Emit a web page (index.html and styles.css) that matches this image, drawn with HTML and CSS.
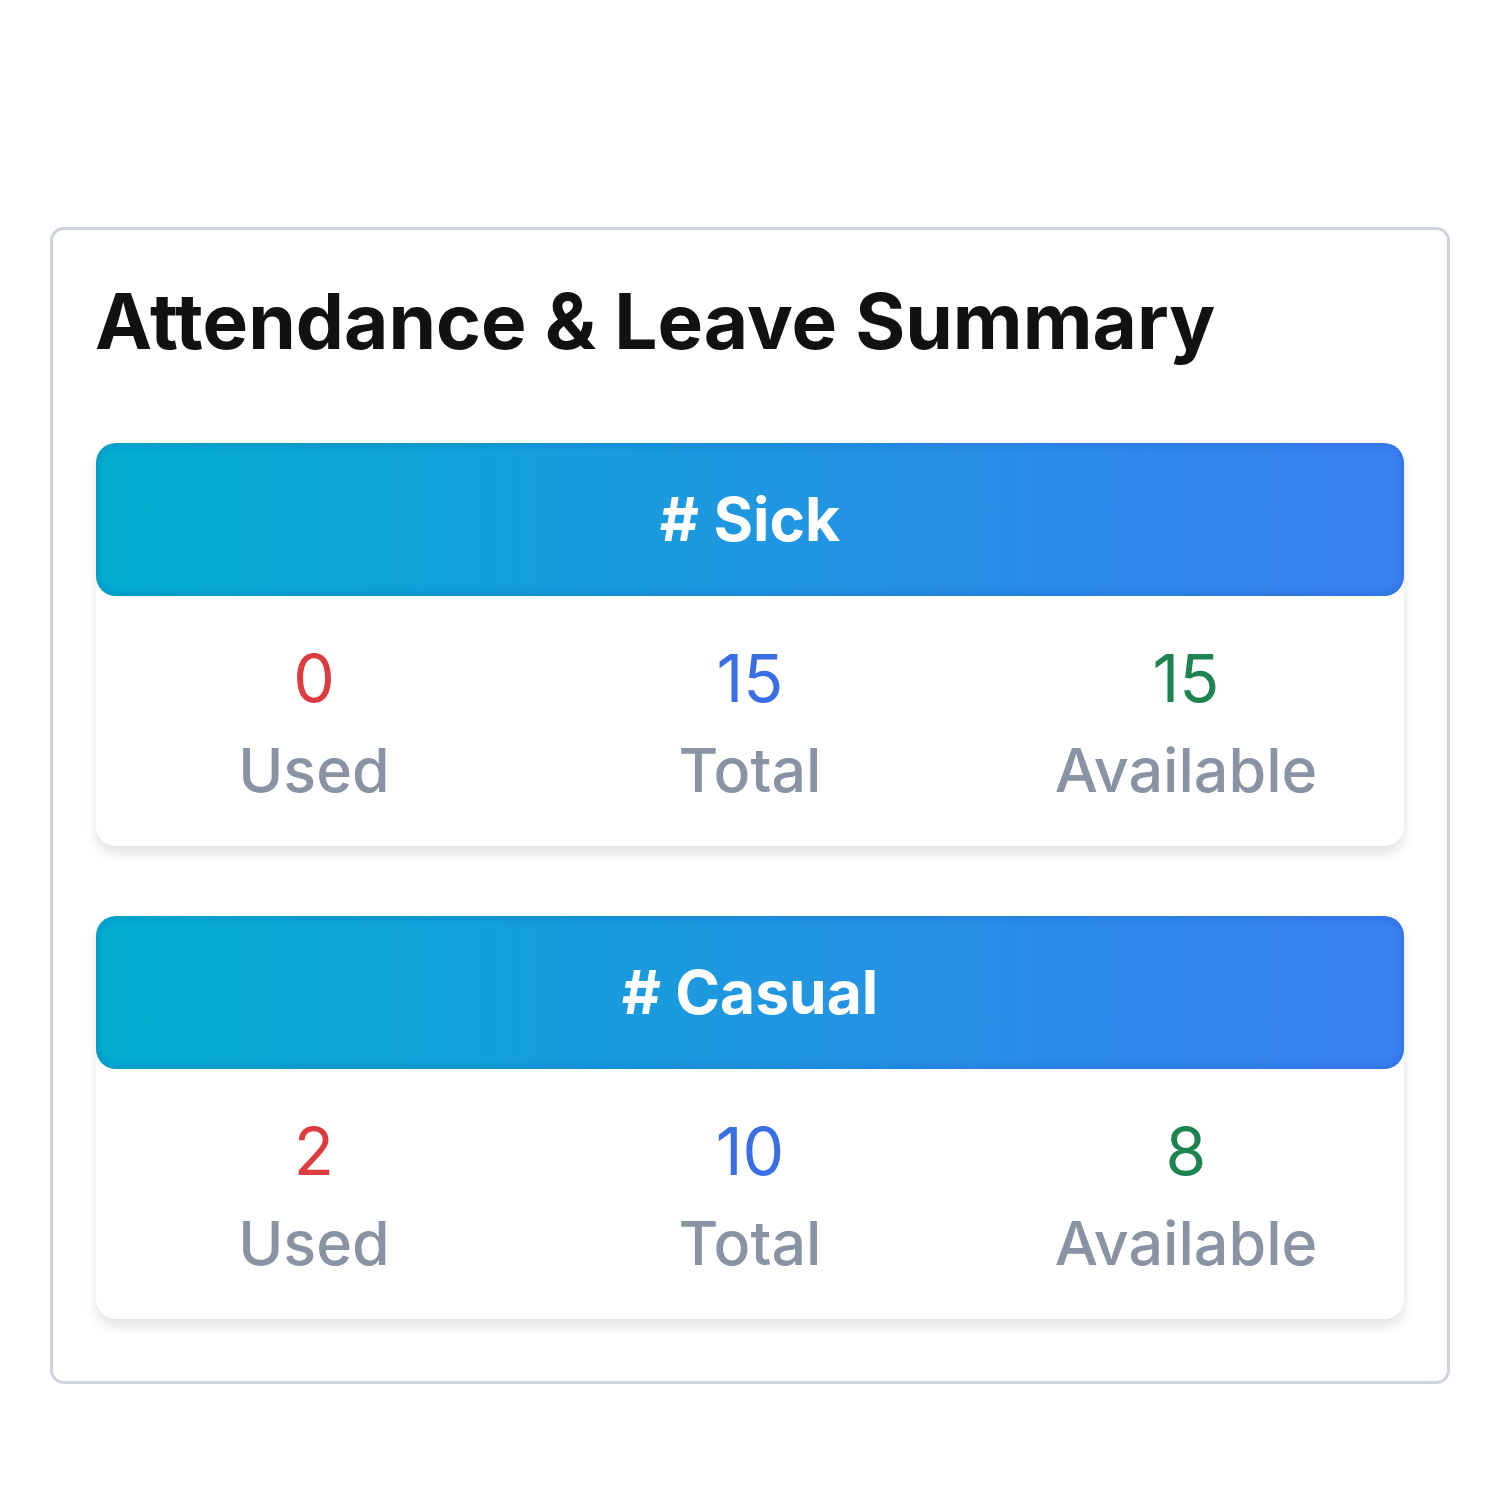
FILE: index.html
```html
<!DOCTYPE html>
<html lang="en">
<head>
    <meta charset="UTF-8">
    <meta name="viewport" content="width=device-width, initial-scale=1.0">
    <title>Attendance & Leave Summary</title>
    <link rel="stylesheet" href="styles.css">
</head>
<body>
    <div class="summary">
        <h2>Attendance &amp; Leave Summary</h2>

        <div class="leave-card">
            <div class="leave-head"># Sick</div>
            <div class="leave-body">
                <div class="stat">
                    <div class="num used">0</div>
                    <div class="label">Used</div>
                </div>
                <div class="stat">
                    <div class="num total">15</div>
                    <div class="label">Total</div>
                </div>
                <div class="stat">
                    <div class="num avail">15</div>
                    <div class="label">Available</div>
                </div>
            </div>
        </div>

        <div class="leave-card">
            <div class="leave-head"># Casual</div>
            <div class="leave-body">
                <div class="stat">
                    <div class="num used">2</div>
                    <div class="label">Used</div>
                </div>
                <div class="stat">
                    <div class="num total">10</div>
                    <div class="label">Total</div>
                </div>
                <div class="stat">
                    <div class="num avail">8</div>
                    <div class="label">Available</div>
                </div>
            </div>
        </div>
    </div>
</body>
</html>
```

FILE: styles.css
```css
body {
    font-family: Inter, "Noto Sans", sans-serif;
    margin: 0;
    padding: 227px 0 0 50px;
    background-color: #ffffff;
}
.summary {
    width: 1400px;
    box-sizing: border-box;
    border: 3px solid #cdd4e0;
    border-radius: 14px;
    padding: 46px 43px 62px 42px;
    background-color: #ffffff;
}
.summary h2 {
    margin: 0 0 75px 0;
    font-size: 76.5px;
    font-weight: 700;
    line-height: 1.2;
    color: #111111;
}
.leave-card {
    margin-left: 1px;
    border-radius: 20px;
    background-color: #ffffff;
    box-shadow: 0 8px 12px rgba(0, 0, 0, 0.11);
    margin-bottom: 70px;
}
.leave-card:last-child {
    margin-bottom: 0;
}
.leave-head {
    height: 153px;
    display: flex;
    align-items: center;
    justify-content: center;
    border-radius: 20px;
    background: linear-gradient(to right, #02aecf, #3b80f2);
    box-shadow: inset 0 -4px 8px rgba(0, 60, 160, 0.16), inset 0 4px 8px rgba(0, 60, 160, 0.12);
    color: #ffffff;
    font-size: 60.5px;
    font-weight: 700;
}
.leave-body {
    display: grid;
    grid-template-columns: 1fr 1fr 1fr;
    padding: 35px 0 32px 0;
    text-align: center;
}
.num {
    font-size: 66px;
    font-weight: 400;
    line-height: 95px;
}
.label {
    font-size: 61px;
    font-weight: 500;
    line-height: 88px;
    color: #8a93a3;
}
.used {
    color: #dc3b40;
}
.total {
    color: #3a6ee4;
}
.avail {
    color: #1d8350;
}
```
